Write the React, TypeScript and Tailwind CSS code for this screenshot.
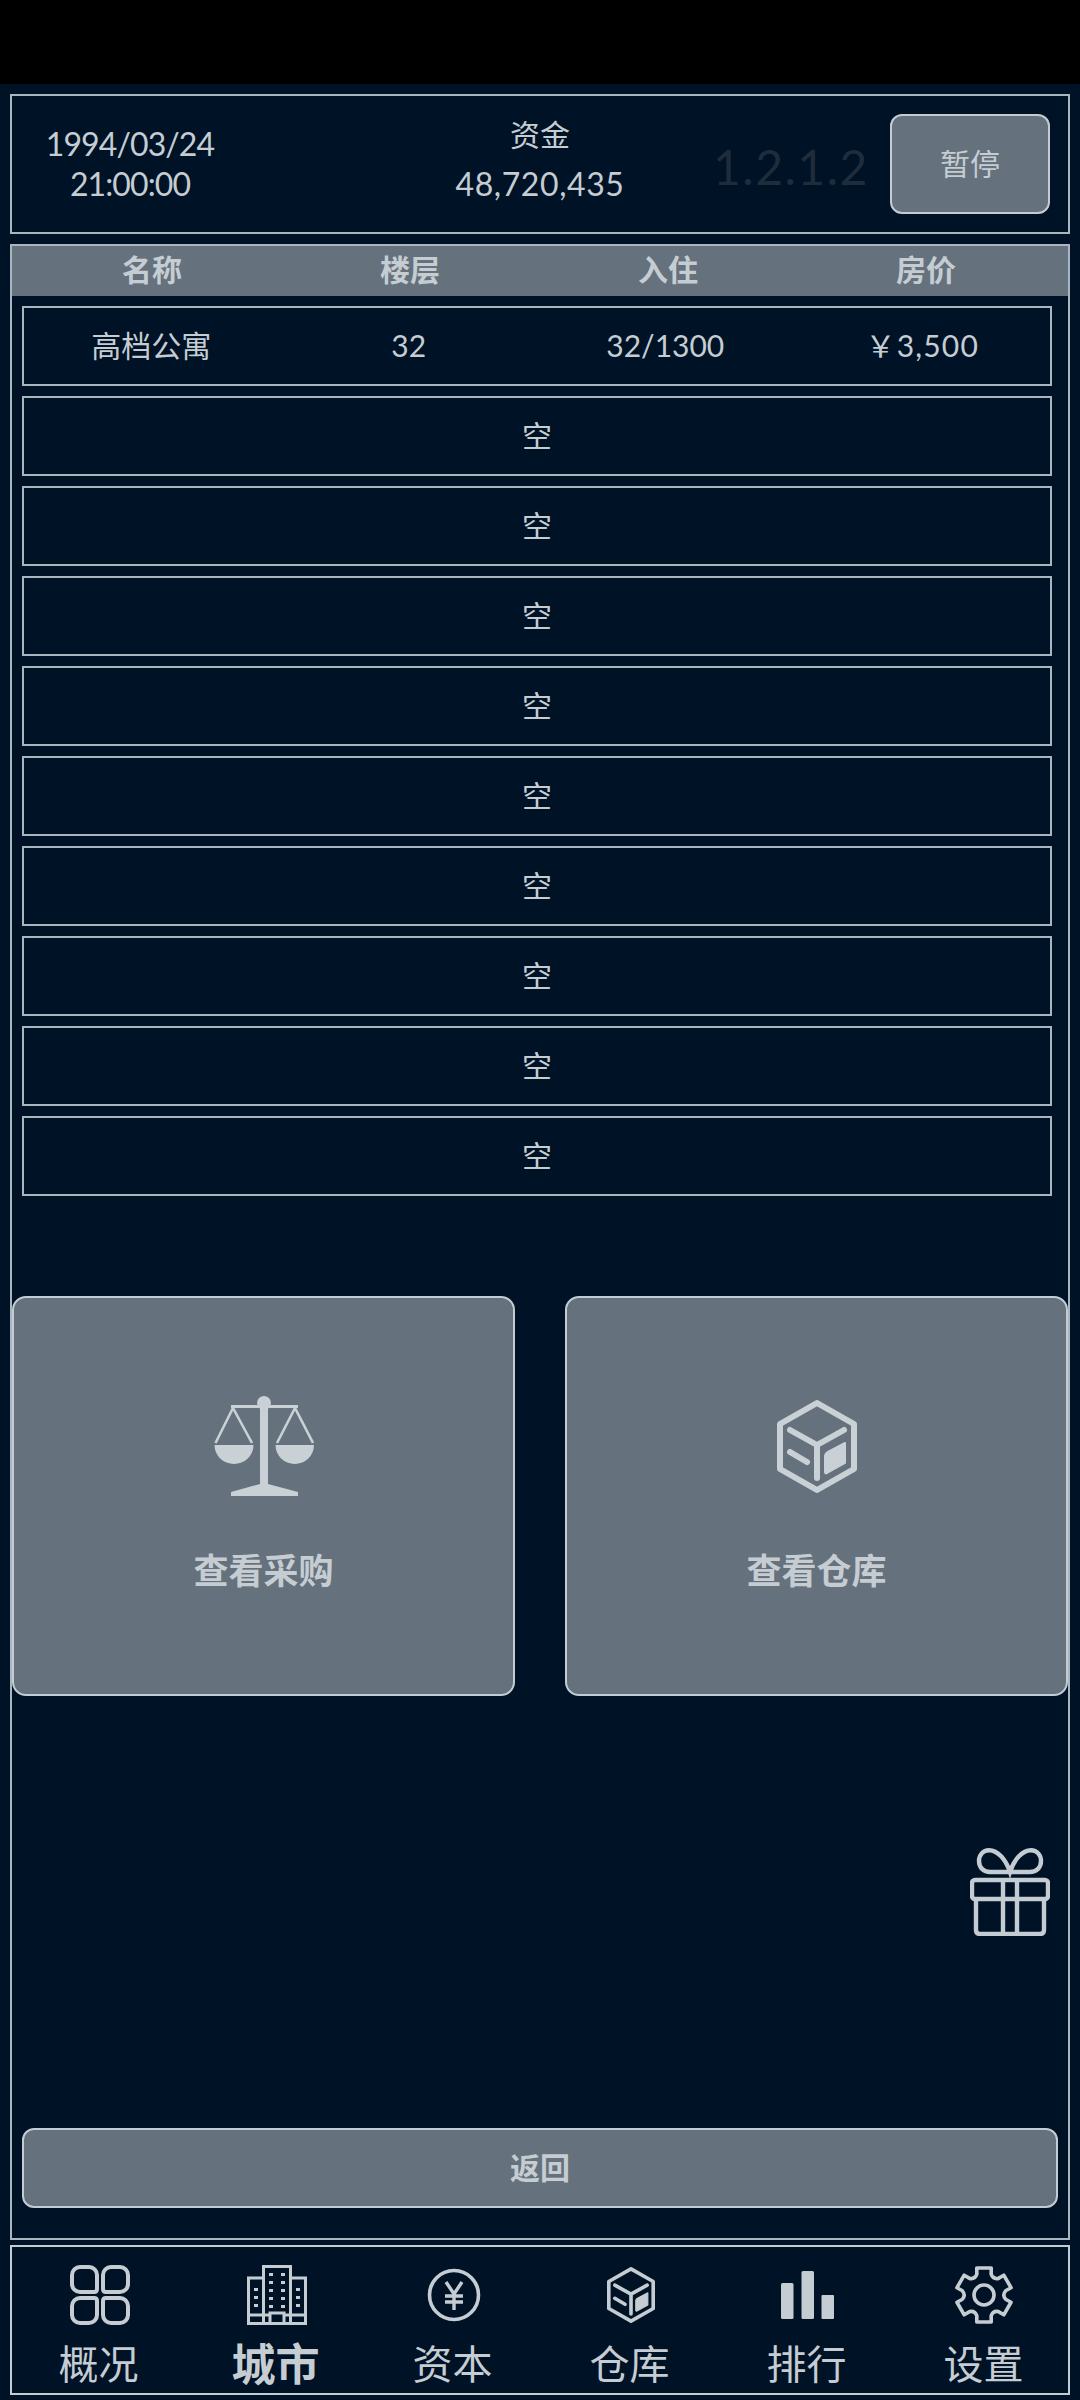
import React from "react";

const stack = "font-[Lato,'Noto_Sans_CJK_SC',sans-serif]";

function ScaleIcon() {
  return (
    <svg viewBox="0 0 100 100" className="h-[100px] w-[100px] text-[#c9d1d6]">
      <circle cx="50" cy="7" r="7" fill="currentColor" />
      <rect x="17" y="9" width="67" height="3" fill="currentColor" />
      <rect x="46" y="7" width="8" height="84" fill="currentColor" />
      <polygon points="46,88 54,88 84,96 84,100 17,100 17,96" fill="currentColor" />
      <path d="M0.5 49H39.5A19.5 19 0 0 1 0.5 49Z" fill="currentColor" />
      <path d="M61.5 49H100A19.25 19 0 0 1 61.5 49Z" fill="currentColor" />
      <path d="M1.5 47L19 12L38 47M63 47L81 12L99 47" fill="none" stroke="currentColor" strokeWidth="2.6" />
    </svg>
  );
}

function CubeIcon({ className }: { className: string }) {
  return (
    <svg viewBox="0 0 80 93" className={className}>
      <path
        d="M40 3L77 24V69L40 90L3 69V24Z"
        fill="none"
        stroke="currentColor"
        strokeWidth="6"
        strokeLinejoin="round"
      />
      <path
        d="M13 30L40 45L67 30M40 45V78M13 52L30 62"
        fill="none"
        stroke="currentColor"
        strokeWidth="6"
        strokeLinecap="round"
        strokeLinejoin="round"
      />
      <path
        d="M48 56Q48 54 50 52.5L68 43V63L50 73Q48 74 48 72Z"
        fill="currentColor"
        stroke="currentColor"
        strokeWidth="2"
        strokeLinejoin="round"
      />
    </svg>
  );
}

function GiftIcon() {
  return (
    <svg viewBox="0 0 80 88" fill="none" stroke="#c3ccd3" strokeWidth="4.4" className="h-[88px] w-[80px]">
      <path d="M40 24C36 12 28 2.2 19 2.2C13 2.2 9 7 9 13C9 20 14 24 20 24H60C66 24 71 20 71 13C71 7 67 2.2 61 2.2C52 2.2 44 12 40 24Z" />
      <rect x="2" y="32" width="76" height="19" rx="3" />
      <path d="M6 51V82Q6 86 10 86H70Q74 86 74 82V51M33 32V86M47 32V86" />
    </svg>
  );
}

function GridIcon() {
  return (
    <svg viewBox="0 0 60 60" fill="none" stroke="currentColor" strokeWidth="4" className="h-[60px] w-[60px]">
      <path d="M10 2H19A8 8 0 0 1 27 10V24Q27 27 24 27H10A8 8 0 0 1 2 19V10A8 8 0 0 1 10 2Z" />
      <path d="M50 2H41A8 8 0 0 0 33 10V24Q33 27 36 27H50A8 8 0 0 0 58 19V10A8 8 0 0 0 50 2Z" />
      <path d="M10 58H19A8 8 0 0 0 27 50V36Q27 33 24 33H10A8 8 0 0 0 2 41V50A8 8 0 0 0 10 58Z" />
      <path d="M50 58H41A8 8 0 0 1 33 50V36Q33 33 36 33H50A8 8 0 0 1 58 41V50A8 8 0 0 1 50 58Z" />
    </svg>
  );
}

function CityIcon() {
  const centerWindows = [8, 16, 24, 32, 40];
  const sideWindows = [23, 31, 39];
  return (
    <svg viewBox="0 0 60 60" className="h-[60px] w-[60px]">
      <path
        d="M16.5 58.5V1.5H43.5V58.5M16.5 13H1.5V58.5H58.5V13H43.5M1.5 50H23M37 50H58.5M23 58.5V48H37V58.5"
        fill="none"
        stroke="currentColor"
        strokeWidth="3"
      />
      {centerWindows.map((y) => (
        <g key={y} fill="currentColor">
          <rect x="22" y={y} width="4" height="3" />
          <rect x="34" y={y} width="4" height="3" />
        </g>
      ))}
      {sideWindows.map((y) => (
        <g key={y} fill="currentColor">
          <rect x="7" y={y} width="4" height="3" />
          <rect x="49" y={y} width="4" height="3" />
        </g>
      ))}
    </svg>
  );
}

function YenIcon() {
  return (
    <svg viewBox="0 0 60 60" fill="none" stroke="currentColor" className="h-[60px] w-[60px]">
      <circle cx="30" cy="30" r="24.5" strokeWidth="3.6" />
      <path d="M22 17L30 29L38 17M21 31H39M21 37H39M30 29V45" strokeWidth="3.4" />
    </svg>
  );
}

function BarsIcon() {
  return (
    <svg viewBox="0 0 60 60" fill="currentColor" className="h-[60px] w-[60px]">
      <rect x="3" y="18" width="12.5" height="36" rx="1.5" />
      <rect x="23.5" y="6" width="12.5" height="48" rx="1.5" />
      <rect x="43.5" y="30" width="12.5" height="24" rx="1" />
    </svg>
  );
}

function gearPath() {
  const at = (deg: number, r: number) => {
    const rad = (deg * Math.PI) / 180;
    return `${(30 + r * Math.cos(rad)).toFixed(2)} ${(30 + r * Math.sin(rad)).toFixed(2)}`;
  };
  let d = "";
  for (let k = 0; k < 6; k++) {
    const a = -90 + 60 * k;
    d += `${k === 0 ? "M" : "L"}${at(a - 19, 22)}L${at(a - 15, 28)}L${at(a + 15, 28)}L${at(a + 19, 22)}`;
    d += `Q${at(a + 30, 18)} ${at(a + 41, 22)}`;
  }
  return d + "Z";
}

function GearIcon() {
  return (
    <svg viewBox="0 0 60 60" fill="none" stroke="currentColor" strokeWidth="3.6" className="h-[60px] w-[60px] -translate-x-[1px]">
      <path d={gearPath()} strokeLinejoin="round" />
      <circle cx="30" cy="30" r="10" />
    </svg>
  );
}

const navItems = [
  { label: "概况", icon: <GridIcon /> },
  { label: "城市", icon: <CityIcon />, active: true },
  { label: "资本", icon: <YenIcon /> },
  { label: "仓库", icon: <CubeIcon className="h-[56px] w-[48px]" /> },
  { label: "排行", icon: <BarsIcon /> },
  { label: "设置", icon: <GearIcon /> },
];

function ActionCard({ label, icon }: { label: string; icon: React.ReactNode }) {
  return (
    <div className="flex h-[400px] w-[503px] flex-col items-center rounded-[14px] border-2 border-[#c3ccd3] bg-[#65717c] pt-[98px]">
      <div className="flex h-[100px] items-center justify-center text-[#c9d1d6]">{icon}</div>
      <div className="mt-[50px] text-[35px] leading-[48px] font-bold text-[#c5cdd3]">{label}</div>
    </div>
  );
}

export default function App() {
  const empties = Array.from({ length: 9 });

  return (
    <div className={`flex h-[2400px] w-[1080px] flex-col bg-black text-[#c5cdd3] ${stack}`}>
      <div className="h-[84px] shrink-0 bg-black" />
      <div className="flex flex-1 flex-col bg-[#001226] px-[10px] pt-[10px]">
        {/* top status */}
        <div className="flex h-[140px] shrink-0 items-center border-2 border-[#a9b5bf]">
          <div className="ml-[1px] w-[234px] text-center text-[32px] leading-[40px] tracking-[-0.9px]">
            <div>1994/03/24</div>
            <div>21:00:00</div>
          </div>
          <div className="ml-[118px] w-[350px] pb-[11px] text-center text-[32px] leading-[50px] tracking-[0.6px]">
            <div className="text-[30px] tracking-normal">资金</div>
            <div>48,720,435</div>
          </div>
          <div className="-ml-[2px] w-[177px] pt-[6px] text-[48px] leading-none tracking-[1.5px] text-[#1e2d3c]">
            1.2.1.2
          </div>
          <button className="flex h-[100px] w-[160px] items-center justify-center rounded-[12px] border-2 border-[#c3ccd3] bg-[#65717c] pb-[2px] text-[30px]">
            暂停
          </button>
        </div>

        {/* building list */}
        <div className="relative mt-[10px] flex h-[1996px] shrink-0 flex-col border-2 border-[#a9b5bf]">
          <div className="grid h-[50px] shrink-0 grid-cols-[repeat(4,258px)] items-center bg-[#65717c] pb-[3px] pl-[11px] text-center text-[30px] font-bold">
            <div>名称</div>
            <div>楼层</div>
            <div>入住</div>
            <div>房价</div>
          </div>

          <div className="mx-[10px] mt-[10px] flex w-[1030px] flex-col gap-[10px]">
            <div className="grid h-[80px] grid-cols-4 items-center border-2 border-[#a9b5bf] pb-[2px] text-center text-[30px]">
              <div className="-ml-[2px]">高档公寓</div>
              <div>32</div>
              <div>32/1300</div>
              <div className="ml-[1px] tracking-[1.2px]">￥3,500</div>
            </div>
            {empties.map((_, i) => (
              <div
                key={i}
                className="flex h-[80px] items-center justify-center border-2 border-[#a9b5bf] pb-[2px] text-[30px]"
              >
                空
              </div>
            ))}
          </div>

          <div className="mt-[100px] flex justify-between">
            <ActionCard label="查看采购" icon={<ScaleIcon />} />
            <ActionCard label="查看仓库" icon={<CubeIcon className="h-[93px] w-[80px]" />} />
          </div>

          <div className="absolute top-[1602px] left-[958px]">
            <GiftIcon />
          </div>

          <button className="mt-auto mb-[30px] ml-[10px] flex h-[80px] w-[1036px] items-center justify-center rounded-[12px] border-2 border-[#c3ccd3] bg-[#65717c] pb-[2px] text-[30px] font-bold">
            返回
          </button>
        </div>

        {/* bottom nav */}
        <div className="mt-[5px] h-[150px] shrink-0 border-2 border-[#c3ccd3]">
          <div className="-ml-[1px] grid grid-cols-[repeat(6,177px)]">
            {navItems.map((item) => (
              <div key={item.label} className="flex flex-col items-center pt-[18px]">
                <div className="flex h-[60px] items-center justify-center">{item.icon}</div>
                <div
                  className={
                    item.active
                      ? "mt-[13px] pr-[2px] text-[44px] leading-[52px] font-bold"
                      : "mt-[13px] pr-[2px] text-[40px] leading-[52px]"
                  }
                >
                  {item.label}
                </div>
              </div>
            ))}
          </div>
        </div>
      </div>
    </div>
  );
}
